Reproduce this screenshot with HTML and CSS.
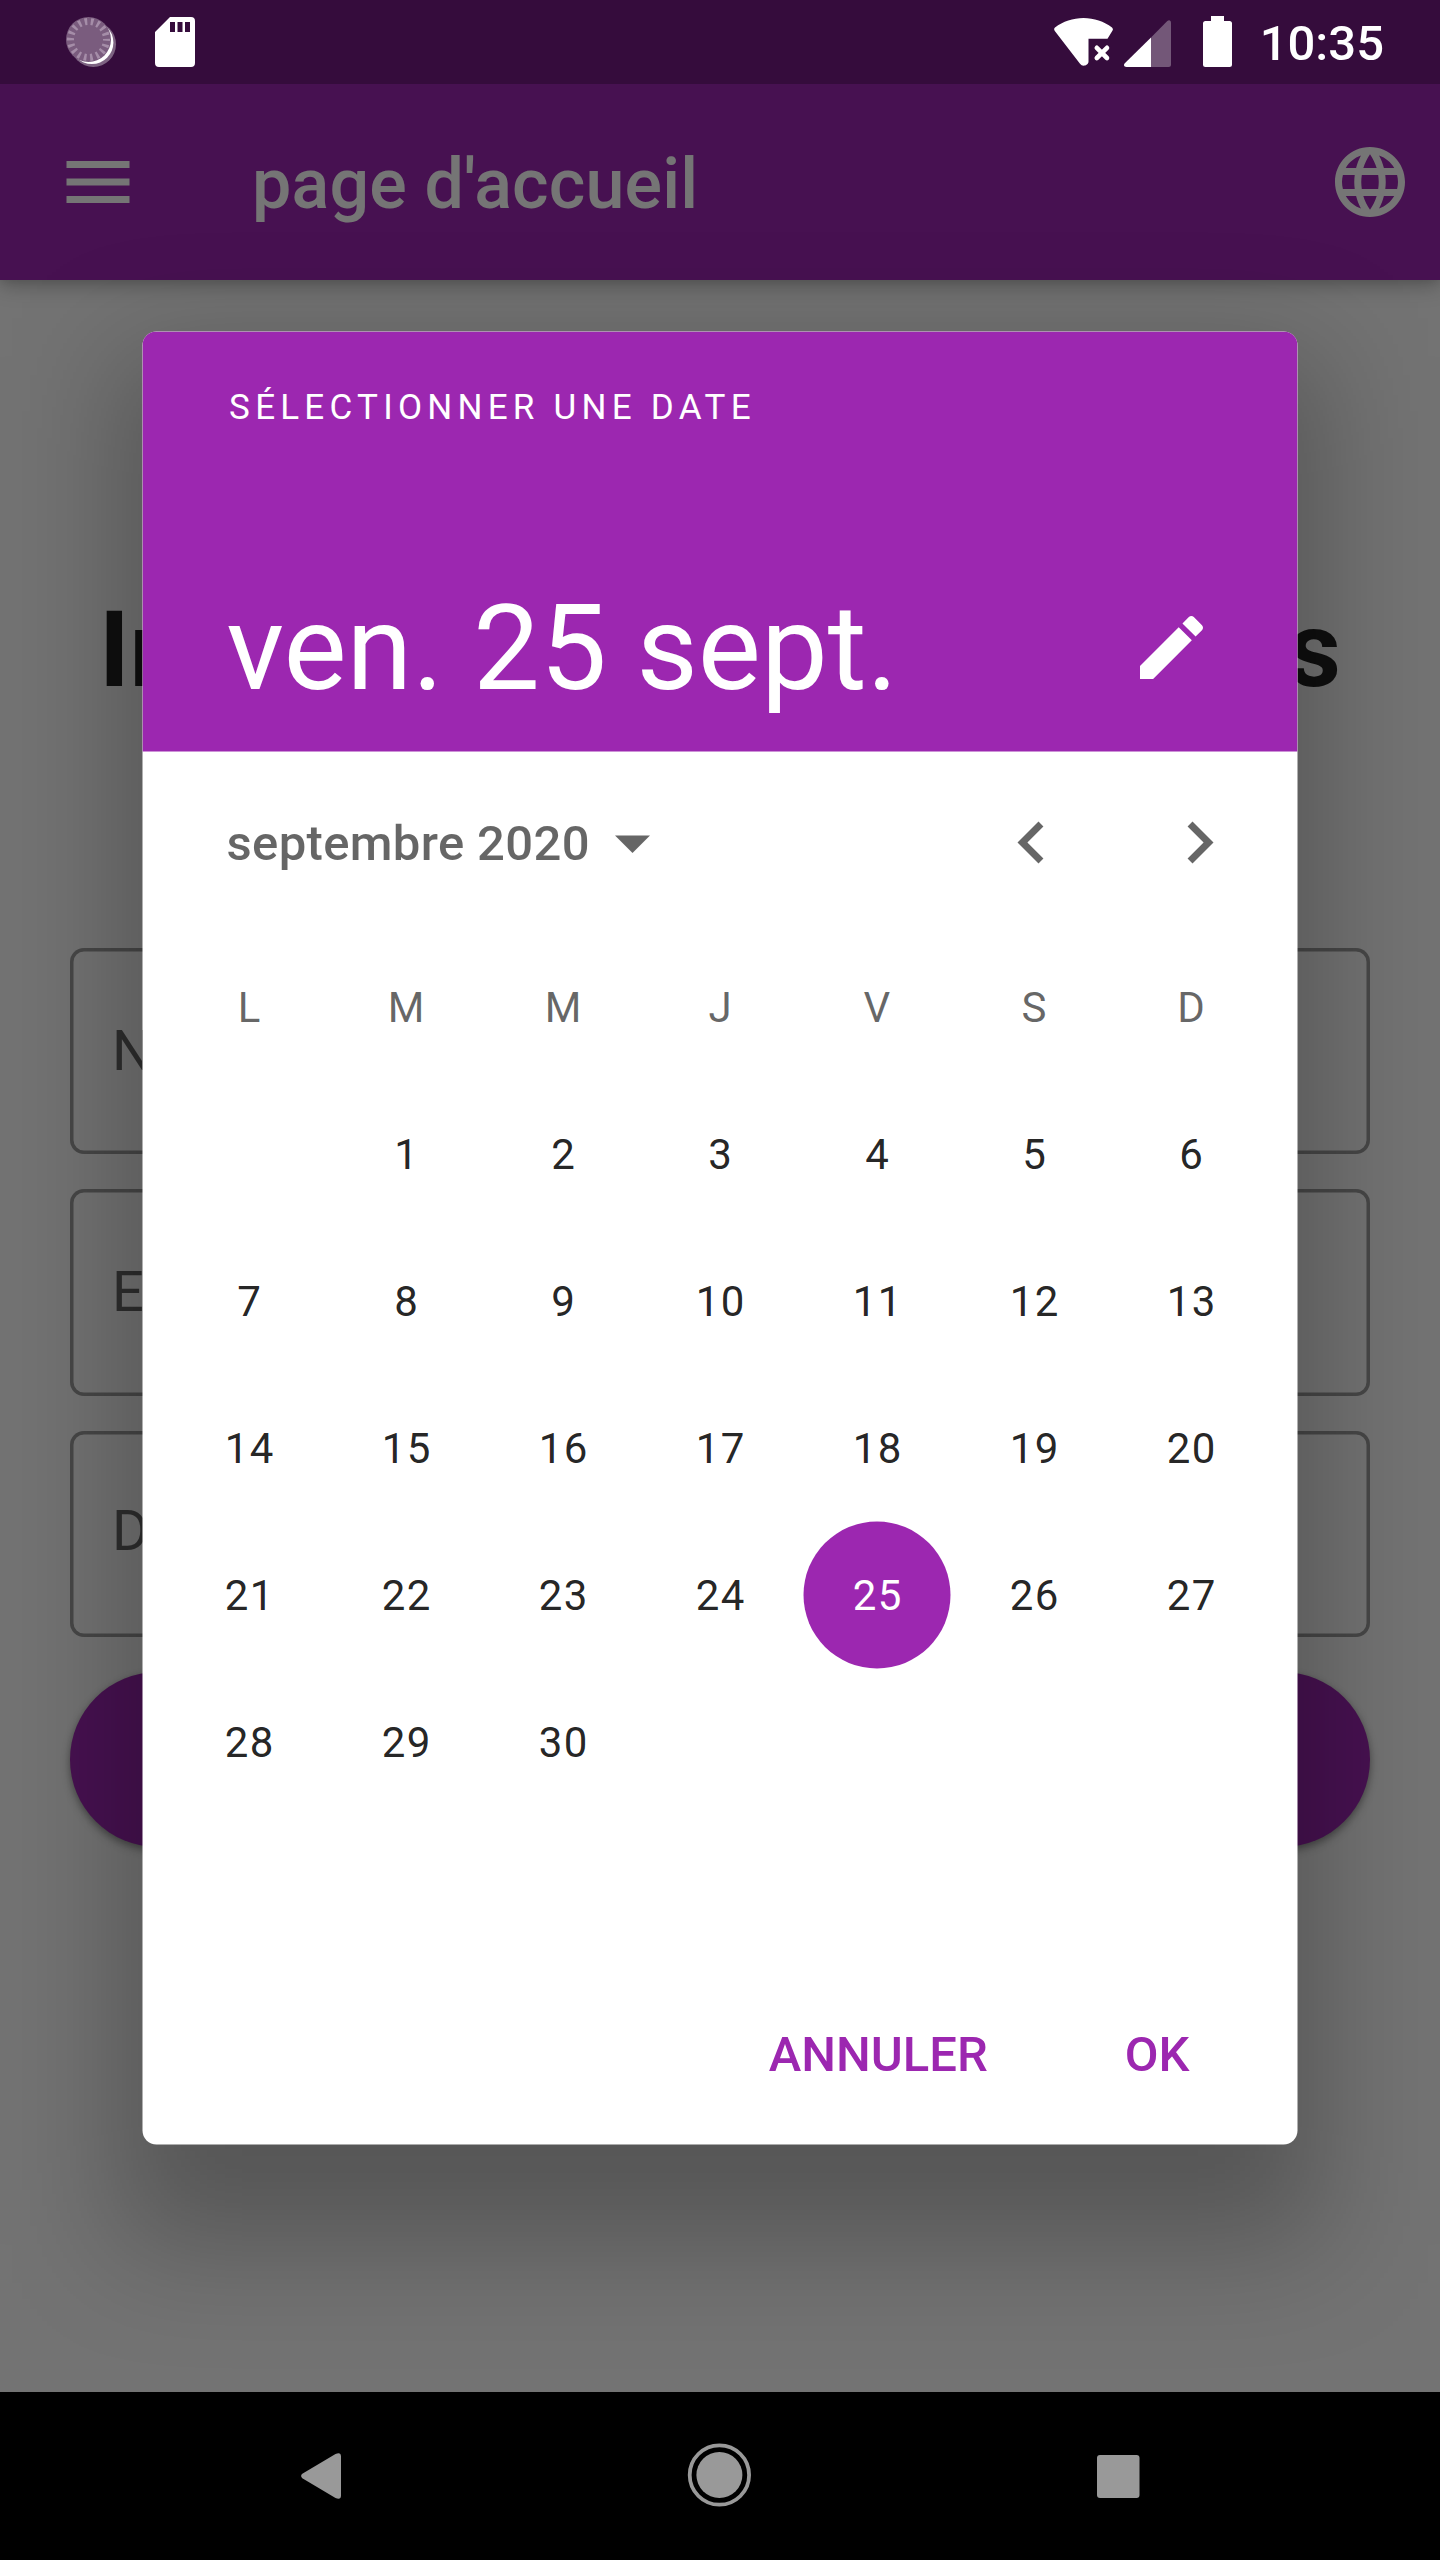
FILE: index.html
```html
<!DOCTYPE html>
<html lang="fr">
<head>
<meta charset="utf-8">
<title>page d'accueil</title>
<link rel="stylesheet" href="styles.css">
</head>
<body>
<div class="screen">
  <div class="page">
    <header class="appbar">
      <svg class="icon" viewBox="0 0 24 24"><path d="M3 18h18v-2H3v2zm0-5h18v-2H3v2zm0-7v2h18V6H3z"/></svg>
      <h1 class="appbar-title">page d'accueil</h1>
      <svg class="icon" viewBox="0 0 24 24"><path d="M11.99 2C6.47 2 2 6.48 2 12s4.47 10 9.99 10C17.52 22 22 17.52 22 12S17.52 2 11.99 2zm6.93 6h-2.95c-.32-1.25-.78-2.45-1.38-3.56 1.84.63 3.37 1.91 4.33 3.56zM12 4.04c.83 1.2 1.48 2.53 1.91 3.96h-3.82c.43-1.43 1.08-2.76 1.91-3.96zM4.26 14C4.1 13.36 4 12.69 4 12s.1-1.36.26-2h3.38c-.08.66-.14 1.32-.14 2 0 .68.06 1.34.14 2H4.26zm.82 2h2.95c.32 1.25.78 2.45 1.38 3.56-1.84-.63-3.37-1.9-4.33-3.56zm2.95-8H5.08c.96-1.66 2.49-2.93 4.33-3.56C8.81 5.55 8.35 6.75 8.03 8zM12 19.96c-.83-1.2-1.48-2.53-1.91-3.96h3.82c-.43 1.43-1.08 2.76-1.91 3.96zM14.34 14H9.66c-.09-.66-.16-1.32-.16-2 0-.68.07-1.35.16-2h4.68c.09.65.16 1.32.16 2 0 .68-.07 1.34-.16 2zm.25 5.56c.6-1.11 1.06-2.31 1.38-3.56h2.95c-.96 1.65-2.49 2.93-4.33 3.56zM16.36 14c.08-.66.14-1.32.14-2 0-.68-.06-1.34-.14-2h3.38c.16.64.26 1.31.26 2s-.1 1.36-.26 2h-3.38z"/></svg>
    </header>
    <main class="form">
      <h2 class="heading"><span>In</span><span>s</span></h2>
      <div class="field">N</div>
      <div class="field">E</div>
      <div class="field field-date">D</div>
      <div class="submit"></div>
    </main>
  </div>
  <div class="scrim"></div>

  <div class="statusbar">
    <div class="status-left">
      <svg width="52" height="50" viewBox="0 0 52 50">
        <circle cx="28.300" cy="27.300" r="22.700" fill="#fff" fill-opacity=".36"/>
        <circle cx="26.900" cy="25.600" r="21.500" fill="#fff"/>
        <circle cx="23.500" cy="22.500" r="22.500" fill="#7a5c7e"/>
        <circle cx="23.500" cy="22.500" r="18" fill="none" stroke="#a58da8" stroke-width="7" stroke-dasharray="2.600 3.683" stroke-dashoffset="1.300"/>
      </svg>
      <svg width="40" height="50" viewBox="0 0 40 50">
        <path fill="#fff" fill-rule="evenodd" d="M15 0h21a4 4 0 0 1 4 4v42a4 4 0 0 1-4 4H4a4 4 0 0 1-4-4V15zM15 5v10h5V5zM22.500 5v10h5V5zM30 5v10h5V5z"/>
      </svg>
    </div>
    <div class="status-right">
      <svg width="59" height="48" viewBox="0 0 59 48">
        <path fill="#fff" d="M29.500 0C40 0 50 3.500 58 9.500Q59.600 11 58.400 12.800L53.500 20.700H34.500V43.500C34.500 46 32 47.700 29.500 47.700Q27.500 47.700 26 45.700L.8 13Q-.6 11 1 9.500C9 3.500 19 0 29.500 0z"/>
        <path stroke="#fff" stroke-width="4.600" stroke-linecap="round" d="M42.800 29.800l10.200 10.200M53 29.800L42.800 40"/>
      </svg>
      <svg width="47" height="47" viewBox="0 0 47 47">
        <path fill="#fff" d="M27 17.500V47H2.500C0 47-.8 44.800.8 43.200z"/>
        <path fill="#fff" fill-opacity=".31" d="M27 17.500L43.300 1C45 -.7 47 .3 47 2.500V44.500Q47 47 44.500 47H27z"/>
      </svg>
      <svg class="battery" width="29" height="51" viewBox="0 0 29 51">
        <path fill="#fff" d="M8 0h13v5h5.500A2.500 2.500 0 0 1 29 7.500v41a2.500 2.500 0 0 1-2.500 2.500h-24A2.500 2.500 0 0 1 0 48.500v-41A2.500 2.500 0 0 1 2.500 5H8z"/>
      </svg>
      <span class="clock">10:35</span>
    </div>
  </div>

  <section class="picker">
    <div class="dialog">
      <div class="dialog-head">
        <div class="help">SÉLECTIONNER UNE DATE</div>
        <div class="date-row">
          <div class="date">ven. 25 sept.</div>
          <svg class="icon" viewBox="0 0 24 24"><path d="M3 17.250V21h3.750L17.810 9.940l-3.750-3.750L3 17.250zM20.710 7.040c.39-.39.39-1.020 0-1.410l-2.340-2.340c-.39-.39-1.020-.39-1.410 0l-1.830 1.830 3.750 3.750 1.830-1.830z"/></svg>
        </div>
      </div>
      <div class="month-row">
        <div class="month">septembre 2020</div>
        <svg class="icon" viewBox="0 0 24 24"><path d="M7 10l5 5 5-5z"/></svg>
        <svg class="icon prev" viewBox="0 0 24 24"><path d="M15.410 7.410L14 6l-6 6 6 6 1.410-1.410L10.830 12z"/></svg>
        <svg class="icon next" viewBox="0 0 24 24"><path d="M10 6L8.590 7.410 13.170 12l-4.580 4.590L10 18l6-6z"/></svg>
      </div>
      <div class="days">
        <span class="dow">L</span><span class="dow">M</span><span class="dow">M</span><span class="dow">J</span><span class="dow">V</span><span class="dow">S</span><span class="dow">D</span>
        <span></span><span>1</span><span>2</span><span>3</span><span>4</span><span>5</span><span>6</span>
        <span>7</span><span>8</span><span>9</span><span>10</span><span>11</span><span>12</span><span>13</span>
        <span>14</span><span>15</span><span>16</span><span>17</span><span>18</span><span>19</span><span>20</span>
        <span>21</span><span>22</span><span>23</span><span>24</span><span class="selected">25</span><span>26</span><span>27</span>
        <span>28</span><span>29</span><span>30</span>
      </div>
      <div class="actions"><span>ANNULER</span><span>OK</span></div>
    </div>
  </section>

  <nav class="navbar">
    <svg width="40" height="46" viewBox="0 0 40 46"><path d="M1.300 20.800L34.500.9Q40-1.400 40 3.500v39q0 4.900-5.500 2.600L1.300 25.200q-2.400-2.200 0-4.400z"/></svg>
    <svg class="home" width="64" height="64" viewBox="0 0 64 64"><circle cx="32.400" cy="32" r="23"/><circle cx="32.400" cy="32" r="29.700" fill="none" stroke="#999" stroke-width="3.800"/></svg>
    <svg width="43" height="43" viewBox="0 0 43 43"><rect width="42.500" height="43" rx="3"/></svg>
  </nav>
</div>
</body>
</html>
```
FILE: styles.css
```css
* { box-sizing: border-box; }

body {
  margin: 0;
  font-family: Roboto, "Liberation Sans", sans-serif;
}

svg { display: block; flex: none; }

.screen {
  position: relative;
  width: 1440px;
  height: 2560px;
  overflow: hidden;
  background: #000;
}

.icon {
  width: 84px;
  height: 84px;
  fill: currentColor;
}

/* Page under the dialog */
.page {
  height: 2392px;
  background: #fafafa;
}

.appbar {
  display: flex;
  align-items: center;
  height: 280px;
  padding: 84px 28px 0 56px;
  color: #fff;
  background: #9c27b0;
  box-shadow: 0 6px 19px rgba(0, 0, 0, .25), 0 2px 8px rgba(0, 0, 0, .08);
}

.appbar-title {
  flex: 1;
  margin: 0;
  padding: 3px 0 0 112px;
  font-size: 70px;
  font-weight: 500;
  line-height: 84px;
  letter-spacing: .150px;
}

.form {
  display: flex;
  flex-direction: column;
  gap: 35px;
  padding: 309px 70px 0;
}

.heading {
  display: flex;
  justify-content: space-between;
  height: 323.500px;
  margin: 0;
  padding: 0 29px;
  font-size: 105px;
  font-weight: 700;
  line-height: 123px;
  color: rgba(0, 0, 0, .87);
}

.field {
  height: 206.500px;
  padding: 0 42px;
  border-radius: 14px;
  box-shadow: inset 0 0 0 3.500px rgba(0, 0, 0, .38);
  font-size: 56px;
  line-height: 207px;
  letter-spacing: .5px;
  color: rgba(0, 0, 0, .6);
}

.field-date { line-height: 201px; }

.submit {
  height: 175px;
  border-radius: 87.500px;
  background: #9c27b0;
  box-shadow: 0 4px 10px rgba(0, 0, 0, .3), 0 2px 6px rgba(0, 0, 0, .15);
}

.scrim {
  position: absolute;
  inset: 0;
  background: rgba(0, 0, 0, .54);
}

/* System bars */
.statusbar {
  position: absolute;
  inset: 0 0 auto;
  display: flex;
  justify-content: space-between;
  height: 84px;
  padding: 16px 56px 0 65px;
  color: #fff;
  background: rgba(0, 0, 0, .25);
}

.status-left {
  display: flex;
  gap: 38px;
  padding-top: 1px;
}

.status-right {
  display: flex;
  align-items: flex-start;
  padding-top: 2px;
}

.status-right svg + svg { margin: 2px 0 0 10.500px; }

.status-right .battery { margin: -2px 0 0 32px; }

.clock {
  margin-left: 28px;
  font-size: 49px;
  font-weight: 500;
  line-height: 52px;
}

.navbar {
  position: absolute;
  inset: auto 0 0;
  display: flex;
  align-items: center;
  justify-content: space-between;
  height: 168px;
  padding: 0 300px 0 301px;
  background: #000;
  fill: #999;
}

.home { margin-bottom: 2px; }

/* Date picker */
.picker {
  position: absolute;
  top: 331px;
  left: 142px;
  width: 1155px;
  height: 1813px;
  transform: translate(.5px, .5px);
}

.picker::before {
  content: "";
  position: absolute;
  inset: 25px -24px -100px;
  background: rgba(0, 0, 0, .25);
  filter: blur(58px);
}

.dialog {
  position: relative;
  height: 100%;
  overflow: hidden;
  border-radius: 14px;
  background: #fff;
}

.dialog-head {
  height: 420px;
  padding: 56px 84px 0;
  color: #fff;
  background: #9c27b0;
}

.help {
  padding-left: 2.600px;
  font-size: 35px;
  line-height: 40px;
  letter-spacing: 5.250px;
}

.date-row {
  display: flex;
  align-items: center;
  justify-content: space-between;
  margin-top: 135px;
}

.date {
  padding-top: 2px;
  font-size: 119px;
  line-height: 168px;
}

.month-row {
  display: flex;
  align-items: center;
  height: 182px;
  padding: 0 56px 0 84px;
  color: rgba(0, 0, 0, .6);
}

.month {
  font-size: 49px;
  font-weight: 500;
  letter-spacing: .350px;
}

.month + .icon { margin-left: .5px; }

.prev { margin-left: auto; }

.next { margin-left: 84px; }

.days {
  display: grid;
  grid-template-columns: repeat(7, 157px);
  grid-auto-rows: 147px;
  justify-items: center;
  height: 1029px;
  padding: 0 28px;
  font-size: 42px;
  line-height: 147px;
  letter-spacing: 1.400px;
  color: rgba(0, 0, 0, .87);
}

.days span { padding-left: 1.400px; }

.days .dow { color: rgba(0, 0, 0, .6); }

.days .selected {
  width: 147px;
  border-radius: 50%;
  text-align: center;
  color: #fff;
  background: #9c27b0;
}

.actions {
  display: flex;
  justify-content: flex-end;
  gap: 137px;
  padding: 1px 108px 0 0;
  font-size: 49px;
  font-weight: 500;
  line-height: 182px;
  color: #9c27b0;
}
```
